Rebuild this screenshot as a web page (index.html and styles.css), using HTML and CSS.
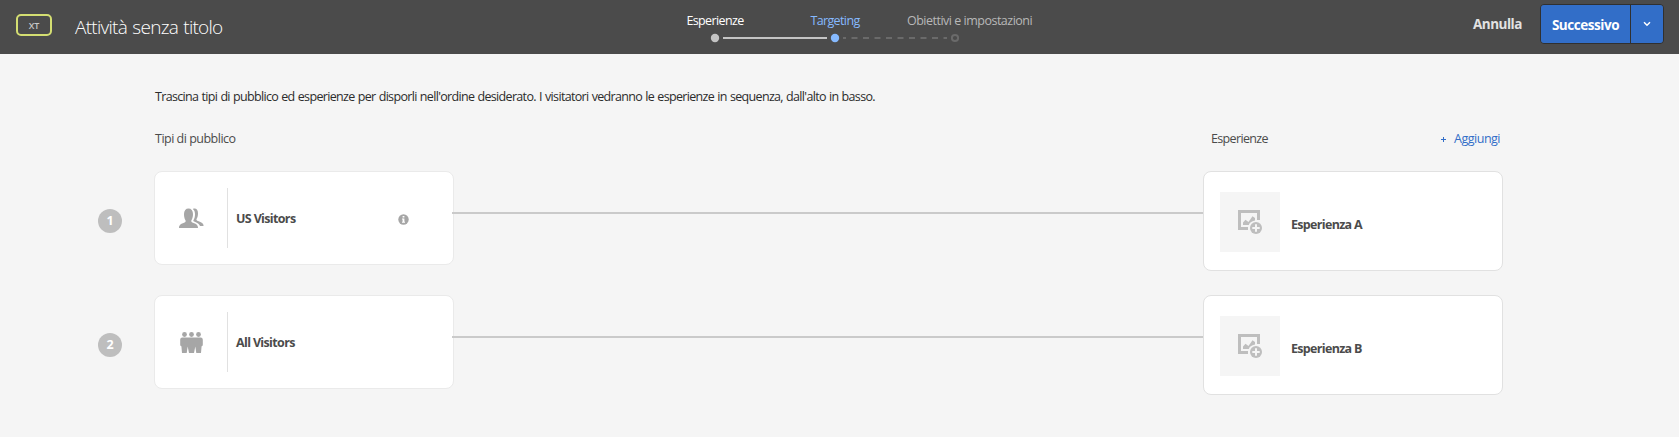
FILE: index.html
```html
<!DOCTYPE html>
<html lang="it">
<head>
<meta charset="utf-8">
<title>Attività senza titolo</title>
<link rel="stylesheet" href="styles.css">
</head>
<body>
<header class="topbar">
  <span class="badge">XT</span>
  <h1 class="title">Attività senza titolo</h1>
  <nav class="steps">
    <div class="step step-done"><span class="step-label">Esperienze</span></div>
    <div class="step step-current"><span class="step-label">Targeting</span></div>
    <div class="step step-next"><span class="step-label">Obiettivi e impostazioni</span></div>
    <svg class="track" width="360" height="10" viewBox="0 0 360 10">
      <circle cx="60" cy="5" r="4.2" fill="#c4c4c4"/>
      <path d="M68 5H172" stroke="#c4c4c4" stroke-width="2"/>
      <circle cx="180" cy="5" r="4.2" fill="#86baff"/>
      <path d="M188 5H292" stroke="#6a6a6a" stroke-width="2" stroke-dasharray="6 5.5" stroke-dashoffset="3"/>
      <circle cx="300" cy="5" r="3.1" fill="none" stroke="#6a6a6a" stroke-width="2"/>
    </svg>
  </nav>
  <div class="actions">
    <span class="cancel">Annulla</span>
    <div class="split">
      <button class="next">Successivo</button>
      <button class="more" aria-label="Altro"><svg width="8" height="6" viewBox="0 0 8 6"><path d="M1 1.2L4 4.2L7 1.2" fill="none" stroke="#fff" stroke-width="1.5"/></svg></button>
    </div>
  </div>
</header>
<main class="content">
  <p class="intro">Trascina tipi di pubblico ed esperienze per disporli nell'ordine desiderato. I visitatori vedranno le esperienze in sequenza, dall'alto in basso.</p>
  <div class="heads">
    <span class="head-aud">Tipi di pubblico</span>
    <div class="head-exp"><span class="head-name">Esperienze</span><a class="add"><svg width="5" height="5" viewBox="0 0 5 5"><path d="M2.5 0V5M0 2.5H5" stroke="#326ec8"/></svg><span>Aggiungi</span></a></div>
  </div>
  <section class="row">
    <span class="num">1</span>
    <article class="audience">
      <div class="aud-icon"><svg width="26" height="20" viewBox="0 0 26 20" fill="#a6a6a6"><path d="M0 20C0 16.8 2.2 15.8 5 14.8C6.9 14.1 7 13 6.3 12C5.4 10.5 5 8.4 5 6C5 2.3 6.8 .4 9.5 .4S14 2.3 14 6C14 8.4 13.5 10.5 12.6 12C11.9 13 12.1 14.1 14 14.8C17 15.8 19 16.8 19 20Z"/><path d="M13.8 .9C16.8-.5 19 1.6 19 5.2C19 7.4 18.6 9.2 17.8 10.5C17.1 11.7 17.4 12.4 19 13C22.6 14.3 24.6 15.2 24.6 18H21C20.3 16 18.8 15 16.8 14.2L14.6 13.3C14.2 12.9 14.3 12.4 14.7 11.7C15.6 10.3 16 8.4 16 6C16 3.6 15.3 2 13.8 .9Z"/></svg></div>
      <span class="aud-name">US Visitors</span>
      <svg class="info" width="11" height="11" viewBox="0 0 11 11"><circle cx="5.5" cy="5.5" r="5.2" fill="#a6a6a6"/><path d="M4.6 2.1H6.4V3.6H4.6ZM4 4.5H6.4V7.8H7V8.8H4V7.8H4.6V5.5H4Z" fill="#fff"/></svg>
    </article>
    <div class="link"></div>
    <article class="experience">
      <div class="thumb"><svg width="24" height="24" viewBox="0 0 24 24"><path d="M22 10V0H0V20H10V17H3V3H19V10Z" fill="#bebebe"/><path d="M5 15V12.5L7.5 9.8L10.5 12L14.5 6.2L17 8V10.5C13.5 11 11.3 13 10.8 15Z" fill="#bebebe"/><circle cx="18" cy="18" r="6" fill="#bebebe"/><path d="M18 14.3V21.7M14.3 18H21.7" stroke="#f5f5f5" stroke-width="2"/></svg></div>
      <span class="exp-name">Esperienza A</span>
    </article>
  </section>
  <section class="row">
    <span class="num">2</span>
    <article class="audience">
      <div class="aud-icon"><svg width="26" height="21" viewBox="0 0 26 21" fill="#a6a6a6"><circle cx="5.5" cy="2.5" r="2.4"/><circle cx="12.5" cy="2.5" r="2.4"/><circle cx="19.5" cy="2.5" r="2.4"/><path d="M3.3 5.6H21.7C23.2 5.6 23.8 6.6 23.8 8V12.5C23.8 13.6 23.4 14 22.6 14.2L22 21H17.3L16.3 14.5L15 21H10L8.7 14.5L7.7 21H3L2.4 14.2C1.6 14 1.2 13.6 1.2 12.5V8C1.2 6.6 1.8 5.6 3.3 5.6Z"/></svg></div>
      <span class="aud-name">All Visitors</span>
    </article>
    <div class="link"></div>
    <article class="experience">
      <div class="thumb"><svg width="24" height="24" viewBox="0 0 24 24"><path d="M22 10V0H0V20H10V17H3V3H19V10Z" fill="#bebebe"/><path d="M5 15V12.5L7.5 9.8L10.5 12L14.5 6.2L17 8V10.5C13.5 11 11.3 13 10.8 15Z" fill="#bebebe"/><circle cx="18" cy="18" r="6" fill="#bebebe"/><path d="M18 14.3V21.7M14.3 18H21.7" stroke="#f5f5f5" stroke-width="2"/></svg></div>
      <span class="exp-name">Esperienza B</span>
    </article>
  </section>
</main>
</body>
</html>
```
FILE: styles.css
```css
* { box-sizing: border-box; }
body { margin: 0; height: 437px; overflow: hidden; background: #f5f5f5; color: #4b4b4b; font: 12.5px/18px "Open Sans", "Noto Sans", sans-serif; white-space: nowrap; }
.topbar { height: 54px; background: #4b4b4b; display: grid; grid-template-columns: 59px 580px 1fr auto; padding: 0 15px 0 16px; align-items: start; }
.badge { width: 36px; height: 22px; margin-top: 14px; border: 2px solid #d4de72; border-radius: 5px; color: #c8c8c8; font-size: 9px; font-weight: 600; line-height: 20px; text-align: center; }
.title { margin: 13px 0 0; font-size: 19px; line-height: 28px; font-weight: 300; color: #fff; letter-spacing: -0.72px; word-spacing: 1px; }
.steps { width: 360px; display: grid; grid-template-columns: repeat(3, 120px); padding-top: 12px; letter-spacing: -0.62px; }
.step { display: flex; justify-content: center; }
.step-done { color: #fff; }
.step-current { color: #86baff; }
.step-next { color: #b8b8b8; justify-content: flex-start; padding-left: 12px; letter-spacing: -0.5px; }
.track { grid-column: 1 / 4; display: block; margin-top: 3px; }
.actions { display: flex; align-items: flex-start; }
.cancel { width: 67px; margin-top: 14px; color: #e2e2e2; font-weight: 700; font-size: 13.5px; line-height: 20px; letter-spacing: -0.5px; }
.split { display: flex; margin-top: 4px; width: 124px; height: 40px; border: 1px solid #303030; border-radius: 4px; overflow: hidden; }
.next, .more { border: 0; padding: 0; background: #326ec8; color: #fff; font: 700 13.5px/20px "Open Sans", "Noto Sans", sans-serif; letter-spacing: -0.45px; }
.next { width: 90px; padding-top: 1px; border-right: 1px solid #303030; }
.more { flex: 1; display: flex; align-items: center; justify-content: center; }
.content { padding: 34px 0 0 98px; }
.intro { margin: 0 0 0 56px; padding-left: 1px; color: #2c2c2c; letter-spacing: -0.67px; word-spacing: 0.6px; }
.heads { display: flex; margin: 24px 0 23px 56px; letter-spacing: -0.5px; }
.head-aud { width: 1057px; padding-left: 1px; }
.head-exp { width: 289px; display: flex; justify-content: space-between; }
.head-name { letter-spacing: -0.65px; }
.add { display: flex; align-items: center; gap: 8px; color: #326ec8; }
.row { display: flex; height: 100px; margin-bottom: 24px; }
.num { width: 24px; height: 24px; margin: 38px 32px 0 0; border-radius: 50%; background: #bebebe; color: #fff; font-weight: 700; line-height: 24px; text-align: center; }
.audience { width: 300px; height: 94px; display: flex; align-items: center; background: #fff; border: 1px solid #eaeaea; border-radius: 8px; }
.aud-icon { width: 73px; height: 60px; display: flex; align-items: center; padding-left: 24px; border-right: 1px solid #e1e1e1; }
.aud-name { width: 170px; padding: 2px 0 0 8px; font-weight: 700; letter-spacing: -0.65px; }
.info { margin-top: 3px; }
.link { width: 751px; height: 2px; margin: 41px 0 0 -2px; background: #cacaca; z-index: 1; }
.experience { width: 300px; height: 100px; display: flex; background: #fff; border: 1px solid #e1e1e1; border-radius: 8px; padding: 20px 16px; }
.thumb { width: 60px; height: 60px; background: #f5f5f5; padding: 18px; }
.exp-name { margin: 24px 0 0 11px; font-weight: 700; letter-spacing: -0.68px; }
```
